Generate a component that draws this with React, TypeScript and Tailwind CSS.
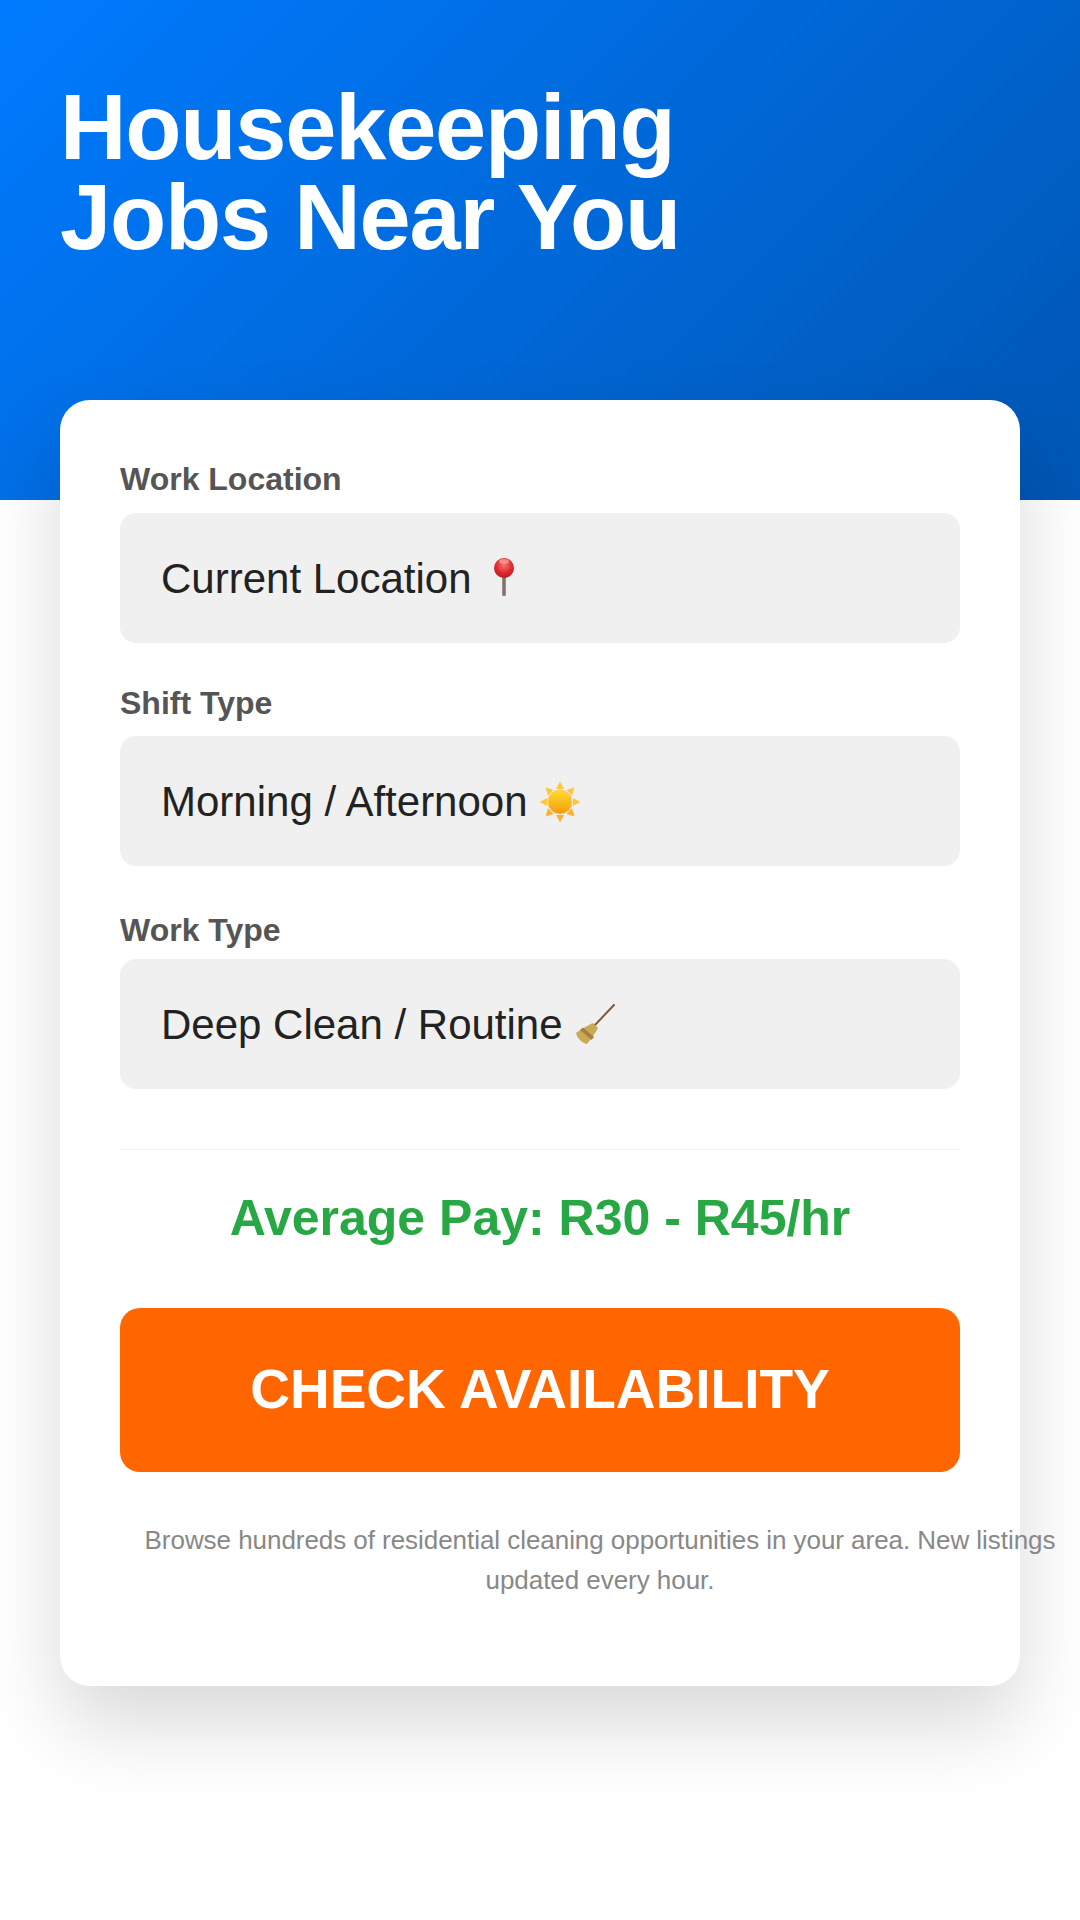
const FONT = "[font-family:'Liberation_Sans',Arial,sans-serif]";

const PinEmoji = () => (
  <svg viewBox="0 0 42 42" className="inline-block h-[42px] w-[42px] align-[-6px]">
    <defs>
      <radialGradient id="pinHead" cx="0.5" cy="0.35" r="0.7">
        <stop offset="0" stopColor="#f87171" />
        <stop offset="0.6" stopColor="#e0262c" />
        <stop offset="1" stopColor="#a81e22" />
      </radialGradient>
    </defs>
    <rect x="19.2" y="18" width="3.6" height="21" rx="1" fill="#85736e" />
    <circle cx="21" cy="11" r="10" fill="url(#pinHead)" />
    <ellipse cx="21" cy="4.5" rx="5" ry="2.4" fill="#fca5a5" opacity="0.7" />
  </svg>
);

const SunEmoji = () => (
  <svg viewBox="0 0 42 42" className="inline-block h-[42px] w-[42px] align-[-7px]">
    <defs>
      <linearGradient id="sunBody" x1="0" y1="0" x2="0" y2="1">
        <stop offset="0" stopColor="#ffdc2e" />
        <stop offset="1" stopColor="#f59a0b" />
      </linearGradient>
    </defs>
    {[0, 45, 90, 135, 180, 225, 270, 315].map((a) => (
      <polygon
        key={a}
        points="21,0.5 25,8 17,8"
        fill={a > 90 && a < 270 ? "#fbb03b" : "#fdc93a"}
        transform={`rotate(${a} 21 21)`}
      />
    ))}
    <circle cx="21" cy="21" r="12" fill="url(#sunBody)" stroke="#f6c77a" strokeWidth="1" />
  </svg>
);

const BroomEmoji = () => (
  <svg viewBox="0 0 42 42" className="inline-block h-[42px] w-[42px] align-[-6px]">
    <path d="M40 2 L20 23" stroke="#80583c" strokeWidth="2" strokeLinecap="round" />
    <path d="M19 20 C15 22 7 26 2 30 C3 35 8 40 13 41 C17 36 22 29 24 25 Z" fill="#c9aa55" />
    <path d="M9 24.5 L20 34 L17.5 37 L6 27 Z" fill="#a9803c" />
  </svg>
);

const Field = ({ label, value, icon, mt, gap }: { label: string; value: string; icon: any; mt: string; gap: string }) => (
  <div className={mt}>
    <div className={`text-[32px] leading-[36px] font-bold text-[#555555] ${gap}`}>{label}</div>
    <div className="flex h-[130px] items-center rounded-[16px] bg-[#f0f0f0] px-[41px] text-[42px] text-[#222222]">
      <span>
        {value} {icon}
      </span>
    </div>
  </div>
);

export default function App() {
  return (
    <div className={`h-[1920px] w-[1080px] overflow-hidden bg-white ${FONT}`}>
      <div className="h-[500px] bg-[linear-gradient(135deg,#007bff,#0056b3)] px-[60px] pt-[82px]">
        <h1 className="text-[92px] leading-[90px] tracking-[-1.2px] font-bold text-white">
          Housekeeping
          <br />
          Jobs Near You
        </h1>
      </div>
      <div className="relative mx-[60px] -mt-[100px] h-[1286px] rounded-[30px] bg-white px-[60px] pt-[61px] shadow-[0_40px_80px_rgba(0,0,0,0.15)]">
        <Field label="Work Location" value="Current Location" icon={<PinEmoji />} mt="" gap="mb-[16px]" />
        <Field label="Shift Type" value="Morning / Afternoon" icon={<SunEmoji />} mt="mt-[42px]" gap="mb-[15px]" />
        <Field label="Work Type" value="Deep Clean / Routine" icon={<BroomEmoji />} mt="mt-[46px]" gap="mb-[11px]" />
        <div className="mt-[60px] border-t border-[#eeeeee]" />
        <div className="mt-[38px] text-center text-[50px] leading-[60px] font-bold text-[#28a745]">
          Average Pay: R30 - R45/hr
        </div>
        <button className="mt-[60px] flex h-[164px] w-full items-center justify-center rounded-[20px] bg-[#ff6600] pb-[2px] text-[55px] font-bold text-white">
          CHECK AVAILABILITY
        </button>
        <p className="mt-[48px] w-[960px] text-center text-[26px] leading-[40px] tracking-[-0.05px] text-[#888888]">
          Browse hundreds of residential cleaning opportunities in your area. New listings updated every hour.
        </p>
      </div>
    </div>
  );
}
